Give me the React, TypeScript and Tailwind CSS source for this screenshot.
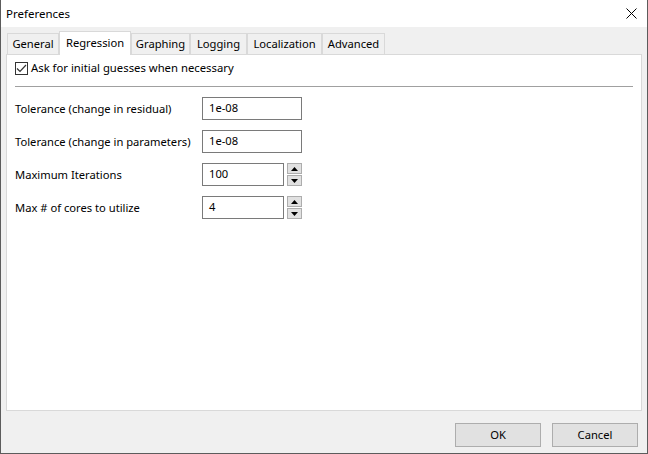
import React, { useState } from 'react';

const tabs = [
  { name: 'General', w: 'w-[52px]' },
  { name: 'Regression', w: 'w-[72px]' },
  { name: 'Graphing', w: 'w-[59px]' },
  { name: 'Logging', w: 'w-[57px]' },
  { name: 'Localization', w: 'w-[75px]' },
  { name: 'Advanced', w: 'w-[63px]' },
];

const rows = [
  { label: 'Tolerance (change in residual)', value: '1e-08', spin: false },
  { label: 'Tolerance (change in parameters)', value: '1e-08', spin: false },
  { label: 'Maximum Iterations', value: '100', spin: true },
  { label: 'Max # of cores to utilize', value: '4', spin: true },
];

const Spinner: React.FC = () => (
  <div className="flex flex-col justify-between w-[15px] h-[23px] ml-[3px]">
    <div className="h-[11px] bg-[#e1e1e1] border border-[#adadad] flex items-center justify-center">
      <svg width="7" height="4" viewBox="0 0 7 4"><path d="M3.5 0 L7 4 L0 4 Z" fill="#000" /></svg>
    </div>
    <div className="h-[11px] bg-[#e1e1e1] border border-[#adadad] flex items-center justify-center">
      <svg width="7" height="4" viewBox="0 0 7 4"><path d="M0 0 L7 0 L3.5 4 Z" fill="#000" /></svg>
    </div>
  </div>
);

export default function App() {
  const [active, setActive] = useState('Regression');
  const [ask, setAsk] = useState(true);

  return (
    <div
      className="w-[648px] h-[454px] flex flex-col bg-[#f0f0f0] border-x border-b border-[#5c5c5c] text-black text-[11.2px] overflow-hidden whitespace-nowrap"
      style={{ fontFamily: '"Noto Sans", "Segoe UI", sans-serif' }}
    >
      {/* Title bar */}
      <div className="h-[27px] bg-white flex items-center justify-between pl-[5px] pr-[10px] shrink-0">
        <span className="text-[11.5px] leading-none">Preferences</span>
        <svg width="11" height="11" viewBox="0 0 11 11">
          <path d="M0.5 0.5 L10.5 10.5 M10.5 0.5 L0.5 10.5" stroke="#000" strokeWidth="1" />
        </svg>
      </div>

      <div className="flex-1 flex flex-col px-[5px] pt-[3px]">
        {/* Tabs */}
        <div className="flex items-end h-[24px] pl-[1px] relative z-10">
          {tabs.map(t => {
            const sel = t.name === active;
            return (
              <button
                key={t.name}
                onClick={() => setActive(t.name)}
                className={
                  sel
                    ? `${t.w} h-[24px] bg-white border border-b-0 border-[#d9d9d9] leading-none relative z-10 -mb-px pb-[2px]`
                    : `${t.w} h-[21px] bg-[#f0f0f0] border border-b-0 border-[#d9d9d9] leading-none`
                }
              >
                {t.name}
              </button>
            );
          })}
        </div>

        {/* Panel */}
        <div className="h-[357px] bg-white border border-[#d9d9d9] px-[8px] pt-[6px]">
          <label className="flex items-center gap-[3px] h-[14px]">
            <span
              onClick={() => setAsk(!ask)}
              className="w-[13px] h-[13px] border border-[#333] bg-white flex items-center justify-center"
            >
              {ask && (
                <svg width="11" height="9" viewBox="0 0 11 9">
                  <path d="M1 4.5 L4 7.5 L10 1" stroke="#333" strokeWidth="1.2" fill="none" />
                </svg>
              )}
            </span>
            <span className="leading-none text-[11.3px]">Ask for initial guesses when necessary</span>
          </label>

          <div className="h-px bg-[#a0a0a0] mt-[11px]" />

          <div className="flex flex-col gap-[10px] mt-[10px]">
            {rows.map(r => (
              <div key={r.label} className="flex items-center h-[23px]">
                <span className="w-[187px] leading-none">{r.label}</span>
                {r.spin ? (
                  <>
                    <div className="w-[82px] h-[23px] border border-[#7a7a7a] bg-white flex items-center px-[6px]">{r.value}</div>
                    <Spinner />
                  </>
                ) : (
                  <div className="w-[100px] h-[23px] border border-[#7a7a7a] bg-white flex items-center px-[6px]">{r.value}</div>
                )}
              </div>
            ))}
          </div>
        </div>

        {/* Buttons */}
        <div className="flex justify-end gap-[11px] mt-[12px] pr-[4px]">
          <button className="w-[86px] h-[24px] bg-[#e1e1e1] border border-[#adadad]">OK</button>
          <button className="w-[86px] h-[24px] bg-[#e1e1e1] border border-[#adadad]">Cancel</button>
        </div>
      </div>
    </div>
  );
}
